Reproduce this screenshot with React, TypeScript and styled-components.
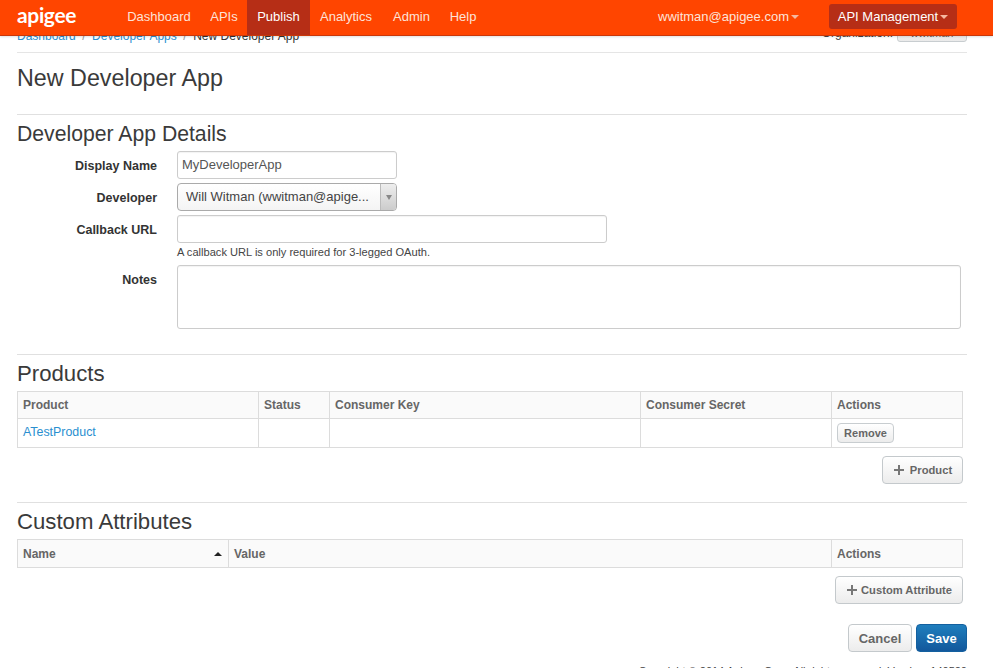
import React from "react";
import styled, { createGlobalStyle } from "styled-components";

const Global = createGlobalStyle`
  html, body { margin: 0; padding: 0; background: #fff; }
  body { font-family: "Liberation Sans", Arial, sans-serif; font-size: 13px; color: #333; overflow: hidden; }
  * { box-sizing: border-box; }
`;

const Page = styled.div`
  position: relative;
  width: 993px;
  height: 668px;
  overflow: hidden;
`;

const NavBar = styled.header`
  position: absolute;
  top: 0;
  left: 0;
  right: 0;
  height: 36px;
  z-index: 2;
  display: flex;
  align-items: stretch;
  padding: 0 36px 0 17px;
  background: #ff4500;
  border-bottom: 1px solid #c9380a;
  box-shadow: 0 1px 2px rgba(0, 0, 0, 0.12);
`;

const Logo = styled.div`
  width: 100px;
  font-family: Lato, "Open Sans", sans-serif;
  font-weight: 700;
  font-size: 21px;
  letter-spacing: -0.35px;
  line-height: 29px;
  color: #fff;
`;

const NavItem = styled.a<{ $active?: boolean; $w: number }>`
  display: block;
  width: ${(p) => p.$w}px;
  text-align: center;
  line-height: 33px;
  font-size: 13px;
  color: ${(p) => (p.$active ? "#fff" : "#fde3d8")};
  background: ${(p) => (p.$active ? "#b62e16" : "transparent")};
`;

const Spacer = styled.div`
  flex: 1;
`;

const Caret = styled.span`
  display: inline-block;
  width: 0;
  height: 0;
  margin-left: 2px;
  vertical-align: 2px;
  border-left: 4px solid transparent;
  border-right: 4px solid transparent;
  border-top: 4px solid #f5b8a0;
`;

const UserMenu = styled.div`
  margin-right: 30px;
  line-height: 33px;
  font-size: 13px;
  color: #fde3d8;
`;

const ProductSwitch = styled.div`
  align-self: flex-start;
  margin-top: 4px;
  width: 128px;
  height: 25px;
  border-radius: 3px;
  background: #b62e16;
  text-align: center;
  line-height: 25px;
  font-size: 13px;
  color: #fff;
`;

const Content = styled.main`
  width: 950px;
  margin-left: 17px;
`;

const TopRow = styled.div`
  display: flex;
  justify-content: space-between;
  align-items: flex-end;
  height: 43px;
  margin-top: 10px;
  padding-bottom: 10px;
  border-bottom: 1px solid #e5e5e5;
`;

const Crumbs = styled.div`
  margin-bottom: -1px;
  font-size: 12px;
  line-height: 14px;
  color: #333;
`;

const Crumb = styled.a`
  color: #2a8fd0;
`;

const Sep = styled.span`
  margin: 0 6.5px;
  color: #999;
`;

const Org = styled.div`
  display: flex;
  align-items: flex-end;
  gap: 4px;
  font-size: 12px;
  color: #444;
`;

const OrgLabel = styled.span`
  margin-bottom: 2px;
  line-height: 14px;
`;

const OrgButton = styled.div`
  width: 70px;
  height: 22px;
  text-align: center;
  line-height: 24px;
  font-size: 11px;
  color: #666;
  border: 1px solid #c8cdd0;
  border-radius: 3px;
  background: linear-gradient(#fff, #eaeaea);
`;

const PageTitle = styled.h1`
  margin: 0;
  height: 62px;
  padding-top: 9px;
  font-size: 23.3px;
  line-height: 33px;
  font-weight: 400;
  color: #3a3a3a;
  border-bottom: 1px solid #e0e0e0;
`;

const SectionTitle = styled.h2<{ $size: number }>`
  margin: 0;
  height: 36px;
  padding-top: 1px;
  font-size: ${(p) => p.$size}px;
  line-height: 36px;
  font-weight: 400;
  color: #3a3a3a;
`;

const Form = styled.div`
  display: grid;
  grid-template-columns: 140px 1fr;
  column-gap: 20px;
  align-items: start;
`;

const Label = styled.label`
  padding-top: 1px;
  text-align: right;
  font-weight: 700;
  font-size: 12.5px;
  line-height: 28px;
  color: #333;
`;

const Field = styled.div<{ $mb?: number }>`
  margin-bottom: ${(p) => p.$mb ?? 4}px;
`;

const TextBox = styled.div<{ $w: string; $h: number }>`
  width: ${(p) => p.$w};
  height: ${(p) => p.$h}px;
  padding: 0 4px;
  line-height: 26px;
  font-size: 13px;
  color: #555;
  border: 1px solid #ccc;
  border-radius: 3px;
  background: #fff;
  box-shadow: inset 0 1px 1px rgba(0, 0, 0, 0.05);
`;

const Select = styled.div`
  display: flex;
  width: 220px;
  height: 28px;
  border: 1px solid #aaa;
  border-radius: 4px;
  background: linear-gradient(#fff, #f4f4f4);
  overflow: hidden;
`;

const SelectText = styled.div`
  flex: 1;
  padding-left: 8px;
  line-height: 26px;
  font-size: 13px;
  color: #444;
  white-space: nowrap;
`;

const SelectArrow = styled.div`
  width: 16px;
  display: flex;
  align-items: center;
  justify-content: center;
  border-left: 1px solid #bbb;
  background: linear-gradient(#eee, #ccc);
  &::after {
    content: "";
    border-left: 3px solid transparent;
    border-right: 3px solid transparent;
    border-top: 5px solid #888;
  }
`;

const Help = styled.div`
  margin-top: 2px;
  font-size: 11.1px;
  line-height: 14px;
  color: #444;
`;

const Section = styled.section<{ $top: number }>`
  margin-top: ${(p) => p.$top}px;
  border-top: 1px solid #e0e0e0;
`;

const Table = styled.table`
  width: 946px;
  border-collapse: collapse;
  table-layout: fixed;
  font-size: 12px;
`;

const Th = styled.th<{ $w?: number; $h?: number }>`
  position: relative;
  width: ${(p) => (p.$w ? `${p.$w}px` : "auto")};
  height: ${(p) => p.$h ?? 27}px;
  padding: 0 5px;
  text-align: left;
  font-weight: 700;
  color: #666;
  background: #fafafa;
  border: 1px solid #dcdcdc;
`;

const Td = styled.td`
  height: 29px;
  padding: 0 5px;
  border: 1px solid #dcdcdc;
  color: #333;
`;

const TableLink = styled.a`
  display: block;
  padding-bottom: 2px;
  font-size: 12.4px;
  color: #2a8fd0;
`;

const SortMark = styled.span`
  position: absolute;
  right: 6px;
  top: 12px;
  border-left: 4px solid transparent;
  border-right: 4px solid transparent;
  border-bottom: 4px solid #222;
`;

const SmallButton = styled.button`
  display: block;
  width: 57px;
  height: 20px;
  padding: 0;
  font: 700 11px "Liberation Sans", Arial, sans-serif;
  color: #666;
  border: 1px solid #c8cdd0;
  border-radius: 4px;
  background: linear-gradient(#fff, #ececec);
`;

const Actions = styled.div<{ $top: number; $right: number; $gap?: number }>`
  display: flex;
  justify-content: flex-end;
  gap: ${(p) => p.$gap ?? 0}px;
  margin-top: ${(p) => p.$top}px;
  margin-right: ${(p) => p.$right}px;
`;

const AddButton = styled.button<{ $w: number; $gap: number }>`
  display: flex;
  align-items: center;
  justify-content: center;
  gap: ${(p) => p.$gap}px;
  width: ${(p) => p.$w}px;
  height: 28px;
  padding: 0;
  font: 700 11.2px "Liberation Sans", Arial, sans-serif;
  color: #666;
  border: 1px solid #c4c9cc;
  border-radius: 4px;
  background: linear-gradient(#fff, #ececec);
`;

const FormButton = styled.button<{ $primary?: boolean; $w: number }>`
  width: ${(p) => p.$w}px;
  height: 28px;
  padding: 0;
  font: 700 13px "Liberation Sans", Arial, sans-serif;
  color: ${(p) => (p.$primary ? "#fff" : "#666")};
  border: 1px solid ${(p) => (p.$primary ? "#14609f" : "#c4c9cc")};
  border-radius: 4px;
  background: ${(p) => (p.$primary ? "linear-gradient(#1f7ebd, #12589c)" : "linear-gradient(#fff, #ececec)")};
`;

const Footer = styled.footer`
  margin-top: 12px;
  text-align: right;
  font-size: 11px;
  line-height: 14px;
  color: #444;
`;

const Plus = () => (
  <svg width="12" height="12" viewBox="0 0 12 12" aria-hidden="true">
    <path d="M6 1v10M1 6h10" stroke="#777" strokeWidth="2" fill="none" />
  </svg>
);

export default function App() {
  return (
    <Page>
      <Global />
      <NavBar>
        <Logo>apigee</Logo>
        <NavItem $w={84}>Dashboard</NavItem>
        <NavItem $w={46}>APIs</NavItem>
        <NavItem $w={63} $active>
          Publish
        </NavItem>
        <NavItem $w={72}>Analytics</NavItem>
        <NavItem $w={59}>Admin</NavItem>
        <NavItem $w={44}>Help</NavItem>
        <Spacer />
        <UserMenu>
          wwitman@apigee.com
          <Caret />
        </UserMenu>
        <ProductSwitch>
          API Management
          <Caret />
        </ProductSwitch>
      </NavBar>
      <Content>
        <TopRow>
          <Crumbs>
            <Crumb>Dashboard</Crumb>
            <Sep>/</Sep>
            <Crumb>Developer Apps</Crumb>
            <Sep>/</Sep>
            New Developer App
          </Crumbs>
          <Org>
            <OrgLabel>Organization:</OrgLabel>
            <OrgButton>wwitman</OrgButton>
          </Org>
        </TopRow>
        <PageTitle>New Developer App</PageTitle>
        <SectionTitle $size={21.2}>Developer App Details</SectionTitle>
        <Form>
          <Label>Display Name</Label>
          <Field>
            <TextBox $w="220px" $h={28}>
              MyDeveloperApp
            </TextBox>
          </Field>
          <Label>Developer</Label>
          <Field>
            <Select>
              <SelectText>Will Witman (wwitman@apige...</SelectText>
              <SelectArrow />
            </Select>
          </Field>
          <Label>Callback URL</Label>
          <Field $mb={6}>
            <TextBox $w="430px" $h={28} />
            <Help>A callback URL is only required for 3-legged OAuth.</Help>
          </Field>
          <Label>Notes</Label>
          <Field $mb={0}>
            <TextBox $w="784px" $h={64} />
          </Field>
        </Form>
        <Section $top={25}>
          <SectionTitle $size={22.2}>Products</SectionTitle>
          <Table>
            <thead>
              <tr>
                <Th $w={241}>Product</Th>
                <Th $w={71}>Status</Th>
                <Th $w={311}>Consumer Key</Th>
                <Th $w={191}>Consumer Secret</Th>
                <Th>Actions</Th>
              </tr>
            </thead>
            <tbody>
              <tr>
                <Td>
                  <TableLink>ATestProduct</TableLink>
                </Td>
                <Td />
                <Td />
                <Td />
                <Td>
                  <SmallButton>Remove</SmallButton>
                </Td>
              </tr>
            </tbody>
          </Table>
          <Actions $top={8} $right={4}>
            <AddButton $w={81} $gap={5}>
              <Plus /> Product
            </AddButton>
          </Actions>
        </Section>
        <Section $top={18}>
          <SectionTitle $size={22.2}>Custom Attributes</SectionTitle>
          <Table>
            <thead>
              <tr>
                <Th $w={211} $h={28}>
                  Name
                  <SortMark />
                </Th>
                <Th $w={603} $h={28}>
                  Value
                </Th>
                <Th $h={28}>Actions</Th>
              </tr>
            </thead>
          </Table>
          <Actions $top={8} $right={4}>
            <AddButton $w={128} $gap={3}>
              <Plus /> Custom Attribute
            </AddButton>
          </Actions>
        </Section>
        <Actions $top={20} $right={0} $gap={4}>
          <FormButton $w={64}>Cancel</FormButton>
          <FormButton $w={51} $primary>
            Save
          </FormButton>
        </Actions>
        <Footer>Copyright © 2014 Apigee Corp. All rights reserved. Version: 140520</Footer>
      </Content>
    </Page>
  );
}
